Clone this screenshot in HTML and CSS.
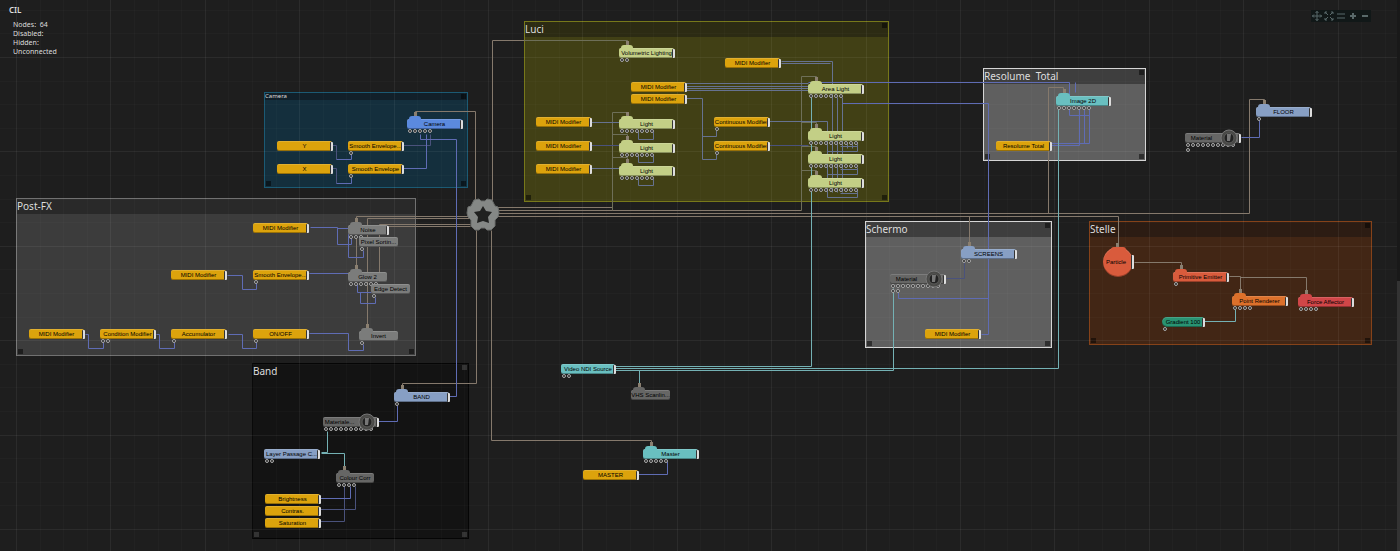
FILE: index.html
```html
<!DOCTYPE html>
<html lang="en">
  <head>
    <meta charset="UTF-8" />
    <meta name="viewport" content="width=device-width, initial-scale=1.0" />
    <title>CIL</title>
    <link rel="stylesheet" href="styles.css">
  </head>
  <body>
    <main class="canvas">
      <div id="groups"></div>
      <svg id="grid" class="layer" aria-hidden="true"></svg>
      <svg id="wires" class="layer" aria-hidden="true"></svg>
      <div id="nodes"></div>

      <svg class="root-node" viewBox="-17 -17 34 34" aria-hidden="true">
        <path class="root-body" d="M-9 -15L-4 -16L-2 -14H2L4 -16L9 -15L12 -9L15 -8L16 -2L15 2L12 5L12 11L8 15L4 15L2 13H-2L-4 15L-8 15L-12 11L-12 5L-15 2L-16 -2L-15 -8L-12 -9Z" />
        <path class="root-star" d="M0 -9L3 -4L9 -3L5 2L6 8L0 6L-6 8L-5 2L-9 -3L-3 -4Z" />
      </svg>

      <header class="topbar">
        <section class="info">
          <h1>CIL</h1>
          <ul>
            <li>Nodes:&nbsp; 64</li>
            <li>Disabled:</li>
            <li>Hidden:</li>
            <li>Unconnected</li>
          </ul>
        </section>
        <nav class="toolbar">
          <button type="button" aria-label="Pan">
            <svg viewBox="0 0 10 10"><path d="M5 0V10M0 5H10M3.500 2L5 .5L6.500 2M3.500 8L5 9.500L6.500 8M2 3.500L.5 5L2 6.500M8 3.500L9.500 5L8 6.500" /></svg>
          </button>
          <button type="button" aria-label="Fit all">
            <svg viewBox="0 0 10 10"><path d="M1 3V1H3M1 1L4 4M7 1H9V3M9 1L6 4M1 7V9H3M1 9L4 6M9 7V9H7M9 9L6 6" /></svg>
          </button>
          <button type="button" aria-label="Align">
            <svg viewBox="0 0 10 10"><path d="M1 3H9M1 7H9" /></svg>
          </button>
          <button type="button" aria-label="Zoom in">
            <svg viewBox="0 0 10 10"><path class="thick" d="M5 2V8M2 5H8" /></svg>
          </button>
          <button type="button" aria-label="Zoom out">
            <svg viewBox="0 0 10 10"><path class="thick" d="M2 5H8" /></svg>
          </button>
        </nav>
      </header>
      <div class="rail"></div>
    </main>

    <script src="script.js"></script>
  </body>
</html>
```
FILE: styles.css
```css
* {
  box-sizing: border-box;
}

body {
  margin: 0;
  background-color: #1e1e1e;
  color: #ddd;
  font-family: "Noto Sans", "Open Sans", sans-serif;
}

.canvas {
  position: relative;
  height: 100vh;
  overflow: hidden;
}

.layer {
  position: absolute;
  inset: 0;
  width: 100%;
  height: 100%;
}

/* header */
.topbar {
  position: relative;
  display: flex;
  justify-content: space-between;
  align-items: flex-start;
  padding: 4px 29px 0 9px;
}

.info h1 {
  margin: 0;
  font-size: 8px;
  line-height: 12px;
  font-weight: 600;
}

.info ul {
  margin: 4px 0 0;
  padding: 0 0 0 4px;
  list-style: none;
  font-size: 7px;
  line-height: 9px;
}

.toolbar {
  display: flex;
  margin-top: 6px;
  background-color: #111818;
}

.toolbar button {
  display: flex;
  align-items: center;
  justify-content: center;
  width: 12px;
  height: 12px;
  padding: 0;
  border: 0;
  background: none;
}

.toolbar svg {
  width: 10px;
  height: 10px;
  fill: none;
  stroke: #59696a;
}

.toolbar .thick {
  stroke-width: 2;
}

.rail {
  position: absolute;
  top: 0;
  right: 0;
  bottom: 0;
  width: 3px;
  background: linear-gradient(#191919 51%, #333 51%);
}

/* grid */
#grid line {
  stroke: #fff;
  stroke-opacity: 0.02;
}

#grid .major {
  stroke-opacity: 0.06;
}

/* root */
.root-node {
  position: absolute;
  left: 466px;
  top: 198px;
  width: 34px;
  height: 34px;
}

.root-body {
  fill: #858886;
  stroke: #6c6f6d;
}

.root-star {
  fill: #202120;
}

/* groups */
.group {
  position: absolute;
  border: 1px solid;
}

.group h2 {
  margin: 0;
  height: 15px;
  font-size: 10px;
  line-height: 15px;
  font-weight: 400;
  color: #ddd;
  white-space: pre;
}

.group .handle {
  position: absolute;
  right: 1px;
  bottom: 1px;
  width: 5px;
  height: 5px;
  background-color: rgba(0, 0, 0, 0.5);
}

.group .handle.left {
  right: auto;
  left: 1px;
}

.group .handle.top {
  bottom: auto;
  top: 1px;
}

.group.camera {
  background-color: #142f3d;
  border-color: #1b5a74;
}

.group.camera h2 {
  height: 7px;
  font-size: 6px;
  line-height: 7px;
  background-color: #11202a;
}

.group.postfx {
  background-color: #3c3c3c;
  border-color: #717171;
}

.group.postfx h2 {
  background-color: #292929;
}

.group.band {
  background-color: #131313;
  border-color: #050505;
}

.group.band .handle {
  background-color: #333;
}

.group.luci {
  background-color: #414015;
  border-color: #77781a;
}

.group.luci h2 {
  background-color: #2c2b13;
}

.group.light {
  background-color: #5f5f5f;
  border-color: #d5d5d5;
}

.group.light h2 {
  background-color: #3e3e3e;
}

.group.stelle {
  background-color: #422615;
  border-color: #854219;
}

.group.stelle h2 {
  background-color: #2c1c13;
}

/* wires */
#wires path {
  fill: none;
  stroke-width: 1;
}

#wires .tan {
  stroke: #85796c;
}

#wires .blue {
  stroke: #5f6cb4;
}

#wires .dim {
  stroke: #4a527c;
}

#wires .teal {
  stroke: #74b1b4;
}

#wires .olive {
  stroke: #6e6f58;
}

#wires .steel {
  stroke: #667290;
}

/* nodes */
.node {
  position: absolute;
  height: 10px;
  border-radius: 2px;
  background-color: var(--fill);
  box-shadow: inset 0 -1px rgba(0, 0, 0, 0.3), inset 0 1px rgba(255, 255, 255, 0.15);
  font-family: "Liberation Sans", sans-serif;
  font-size: 6px;
  line-height: 10px;
  text-align: center;
  color: #000;
  white-space: pre;
}

.node .output {
  position: absolute;
  top: 1px;
  right: -1px;
  width: 3px;
  height: 9px;
  border-left: 1px solid #333;
  border-radius: 1px;
  background-color: #ddd;
}

.node .tab {
  position: absolute;
  left: 2px;
  top: -3px;
  width: 12px;
  height: 4px;
  border-radius: 3px 3px 0 0;
  background-color: var(--fill);
}

.node .tab::before {
  content: "";
  position: absolute;
  left: 5px;
  top: -4px;
  width: 3px;
  height: 4px;
  background-color: #8a7f70;
}

.node .inputs {
  position: absolute;
  left: 1px;
  top: 10px;
  display: flex;
  flex-wrap: wrap;
  gap: 1px;
  width: 52px;
}

.node .inputs i {
  width: 4px;
  height: 4px;
  border: 1px solid #aaa;
  border-radius: 2px;
  background-color: #222;
}

.node .dial {
  position: absolute;
  left: 35px;
  top: -4px;
  width: 18px;
  height: 18px;
}

.node.preview {
  padding-right: 22px;
}

.yellow {
  --fill: #dca30c;
}

.lime {
  --fill: #c3cf86;
}

.gray {
  --fill: #7b7c7b;
}

.dark {
  --fill: #666665;
}

.blue-node {
  --fill: #5b8ade;
}

.sky {
  --fill: #879fc4;
}

.cyan {
  --fill: #69bfc0;
}

.coral {
  --fill: #d95b3c;
}

.orange {
  --fill: #dc702b;
}

.red {
  --fill: #d04648;
}

.green {
  --fill: #299372;
  border-radius: 5px 2px 2px 5px;
}

.node.round {
  height: 30px;
  border-radius: 15px;
  line-height: 30px;
  text-align: left;
  padding-left: 3px;
}

.node.round .tab {
  left: 8px;
  top: 0;
  width: 15px;
}

.node.round .output {
  top: 8px;
  height: 14px;
}
```
FILE: script.js
```
const SVG = "http://www.w3.org/2000/svg";

// x, y, width, height, style, title, handles
const groups = [
  [264, 92, 204, 96, "camera", "Camera", ["top", "left", ""]],
  [16, 198, 400, 158, "postfx", "Post-FX", ["left", ""]],
  [252, 363, 217, 176, "band", "Band", ["top", "left", ""]],
  [524, 21, 365, 181, "luci", "Luci", ["top", "left", ""]],
  [983, 68, 163, 93, "light", "Resolume  Total", ["top", "left", ""]],
  [865, 221, 187, 127, "light", "Schermo", ["top", "left", ""]],
  [1089, 221, 283, 124, "stelle", "Stelle", ["top", "left", ""]],
];

// x, y, width, style, label, inputs, parts (o = output, t = tab, d = dial)
const nodes = [
  [277, 141, 55, "yellow", "Y", 0, "o"],
  [277, 164, 55, "yellow", "X", 0, "o"],
  [348, 141, 55, "yellow", "Smooth Envelope...", 1, "o"],
  [348, 164, 55, "yellow", "Smooth Envelope", 1, "o"],
  [407, 119, 55, "blue-node", "Camera", 5, "ot"],

  [253, 223, 55, "yellow", "MIDI Modifier", 0, "o"],
  [171, 270, 55, "yellow", "MIDI Modifier", 0, "o"],
  [253, 270, 55, "yellow", "Smooth Envelope...", 1, "o"],
  [29, 329, 55, "yellow", "MIDI Modifier", 0, "o"],
  [100, 329, 55, "yellow", "Condition Modifier", 2, "o"],
  [171, 329, 55, "yellow", "Accumulator", 1, "o"],
  [253, 329, 55, "yellow", "ON/OFF", 1, "o"],
  [348, 225, 40, "gray", "Noise", 3, "ot"],
  [359, 237, 39, "gray", "Pixel Sortin...", 1, ""],
  [348, 272, 39, "gray", "Glow 2", 6, "t"],
  [371, 284, 39, "gray", "Edge Detect", 1, ""],
  [359, 331, 39, "gray", "Invert", 1, "t"],

  [394, 392, 55, "sky", "BAND", 1, "ot"],
  [323, 417, 55, "dark", "Materiale...", 10, "od"],
  [264, 449, 55, "sky", "Layer Passage C...", 2, "o"],
  [336, 473, 38, "dark", "Colour Corr", 4, "t"],
  [265, 494, 55, "yellow", "Brightness", 0, "o"],
  [265, 506, 55, "yellow", "Contras.", 0, "o"],
  [265, 518, 55, "yellow", "Saturation", 0, "o"],

  [619, 48, 55, "lime", "Volumetric Lighting", 2, "ot"],
  [725, 58, 55, "yellow", "MIDI Modifier", 0, "o"],
  [631, 82, 55, "yellow", "MIDI Modifier", 0, "o"],
  [631, 94, 55, "yellow", "MIDI Modifier", 0, "o"],
  [536, 117, 55, "yellow", "MIDI Modifier", 0, "o"],
  [536, 141, 55, "yellow", "MIDI Modifier", 0, "o"],
  [536, 164, 55, "yellow", "MIDI Modifier", 0, "o"],
  [619, 119, 55, "lime", "Light", 7, "ot"],
  [619, 143, 55, "lime", "Light", 7, "ot"],
  [619, 166, 55, "lime", "Light", 7, "ot"],
  [714, 117, 55, "yellow", "Continuous Modifier", 1, "o"],
  [714, 141, 55, "yellow", "Continuous Modifier", 1, "o"],
  [808, 84, 55, "lime", "Area Light", 7, "ot"],
  [808, 131, 55, "lime", "Light", 10, "ot"],
  [808, 154, 55, "lime", "Light", 10, "ot"],
  [808, 178, 55, "lime", "Light", 10, "ot"],

  [1056, 96, 54, "cyan", "Image 2D", 7, "ot"],
  [996, 141, 55, "yellow", "Resolume Total", 0, "o"],
  [1256, 107, 55, "sky", "FLOOR", 1, "ot"],
  [1185, 133, 55, "dark", "Material", 11, "od"],

  [961, 249, 55, "sky", "SCREENS", 2, "ot"],
  [890, 274, 55, "dark", "Material", 12, "od"],
  [925, 329, 55, "yellow", "MIDI Modifier", 0, "o"],

  [1103, 247, 30, "coral round", "Particle", 0, "ot"],
  [1173, 272, 55, "coral", "Primitive Emitter", 1, "ot"],
  [1232, 296, 55, "orange", "Point Renderer", 4, "ot"],
  [1298, 297, 55, "red", "Force Affector", 4, "ot"],
  [1162, 317, 42, "green", "Gradient 100", 1, "o"],

  [561, 364, 54, "cyan", "Video NDI Source", 2, "o"],
  [631, 390, 39, "dark", "VHS Scanlin...", 0, "t"],
  [643, 449, 55, "cyan", "Master", 5, "ot"],
  [583, 470, 55, "yellow", "MASTER", 0, "o"],
];

const wires = {
  tan: [
    "M415 112V111H475V205",
    "M356 222V216H470", "M367 326V218H470", "M379 272V224H470", "M388 230V226H470", "M356 236V267",
    "M497 207H612", "M497 210H801", "M497 213H1249V99H1264V103", "M497 216H1118V245",
    "M969 216V245", "M1048 213V87H1063V92",
    "M492 200V40H524", "M476 230V383H402V387", "M491 230V440H651V445",
    "M1134 262H1181V267", "M1229 276H1240V291", "M1240 277H1306V292",
  ],
  olive: [
    "M524 40H627V44", "M612 210V112H627V115", "M612 134H627V138", "M612 157H627V161",
    "M801 210V76H816V79", "M801 122H816V126", "M801 146H816V150", "M801 170H816V173",
  ],
  dim: [
    "M332 145H336V159", "M332 168H336V183", "M403 145H430V134",
    "M591 145H619", "M769 145H808", "M320 521H344V486",
    "M946 278H964V261", "M320 509H355V486",
  ],
  steel: [
    "M591 122H619", "M591 168H619",
    "M638 131V139H653V131", "M638 154V162H653V154", "M638 178V185H653V178",
    "M686 83H808", "M686 86H808", "M686 88H808", "M686 90H808",
    "M686 98H702V159H716V153", "M702 136H716V130",
    "M781 61H832V192", "M781 63H830", "M837 97V192", "M842 97V192",
    "M769 121H827V197H857V190", "M827 174H857V167", "M827 151H857V143",
    "M840 193H857", "M840 169H857", "M840 146H857", "M852 143V148", "M847 143V148",
  ],
  blue: [
    "M336 159H351V153", "M336 183H351V176", "M403 168H426V134", "M420 134V139H456V396H449",
    "M310 227H337V244H351V238", "M337 228H348V257H363V250",
    "M227 275H242V289H256V282", "M309 273H348",
    "M357 284V292H372", "M360 292V303H375V297",
    "M85 334H88V348H103V342", "M156 334H159V348H174V342", "M228 334H242V348H256V342",
    "M309 333H348V350H363V344",
    "M378 421H397V405", "M320 498H350V486",
    "M808 82H1069V115H1089", "M842 103H988V334H981",
    "M1050 143H1089V109", "M1079 109V145H1050", "M1084 109V143", "M1075 82V92",
    "M898 290V298H988", "M1241 137H1259V120", "M638 474H667V461",
  ],
  teal: [
    "M321 452H327V431", "M321 453H344V470",
    "M615 366H811V97", "M615 368H1058V109", "M615 370H893V288", "M639 370V387",
    "M1204 321H1235V309",
  ],
};

const dial = `<svg class="dial" viewBox="0 0 18 18">
  <circle cx="9" cy="9" r="8" fill="#4a4a48" stroke="#777" />
  <circle cx="9" cy="9" r="5" fill="#222" stroke="#5c5c5a" />
  <path d="M7 5H11L10 12H7Z" fill="#777" />
</svg>`;

function place(el, x, y, width) {
  el.style.left = x + "px";
  el.style.top = y + "px";
  el.style.width = width + "px";
}

function drawGrid() {
  const grid = document.getElementById("grid");
  const step = 118 / 5;
  const addLine = (x1, y1, x2, y2, major) => {
    const line = document.createElementNS(SVG, "line");
    line.setAttribute("x1", x1);
    line.setAttribute("y1", y1);
    line.setAttribute("x2", x2);
    line.setAttribute("y2", y2);
    if (major) line.classList.add("major");
    grid.appendChild(line);
  };
  for (let i = 0; 16 + i * step < window.innerWidth; i++) {
    const x = Math.round(16 + i * step) + 0.5;
    addLine(x, 0, x, window.innerHeight, i % 4 === 0);
  }
  for (let i = -2; 57 + i * step < window.innerHeight; i++) {
    const y = Math.round(57 + i * step) + 0.5;
    addLine(0, y, window.innerWidth, y, i % 4 === 0);
  }
}

function drawGroups() {
  const layer = document.getElementById("groups");
  groups.forEach(([x, y, width, height, style, title, handles]) => {
    const el = document.createElement("section");
    el.className = "group " + style;
    place(el, x, y, width);
    el.style.height = height + "px";
    el.innerHTML =
      `<h2>${title}</h2>` +
      handles.map((h) => `<span class="handle ${h}"></span>`).join("");
    layer.appendChild(el);
  });
}

function drawWires() {
  const layer = document.getElementById("wires");
  const g = document.createElementNS(SVG, "g");
  // half pixel shift keeps the lines sharp
  g.setAttribute("transform", "translate(0.5 0.5)");
  Object.keys(wires).forEach((kind) => {
    wires[kind].forEach((d) => {
      const path = document.createElementNS(SVG, "path");
      path.setAttribute("d", d);
      path.setAttribute("class", kind);
      g.appendChild(path);
    });
  });
  layer.appendChild(g);
}

function drawNodes() {
  const layer = document.getElementById("nodes");
  nodes.forEach(([x, y, width, style, label, inputs, parts]) => {
    const el = document.createElement("div");
    el.className = "node " + style;
    place(el, x, y, width);
    let html = "";
    if (parts.includes("t")) html += '<span class="tab"></span>';
    html += `<span>${label}</span>`;
    if (inputs) html += `<span class="inputs">${"<i></i>".repeat(inputs)}</span>`;
    if (parts.includes("o")) html += '<span class="output"></span>';
    if (parts.includes("d")) {
      el.classList.add("preview");
      html += dial;
    }
    el.innerHTML = html;
    layer.appendChild(el);
  });
}

drawGroups();
drawGrid();
drawWires();
drawNodes();
```
